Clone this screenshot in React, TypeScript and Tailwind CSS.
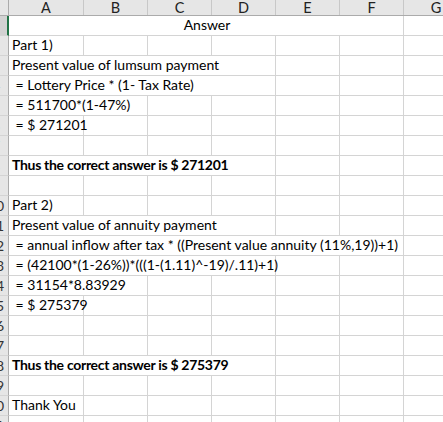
import React from "react";

type Row = { text?: string; span?: number; bold?: boolean; center?: boolean };

const rows: Row[] = [
  { text: "Answer", span: 6, center: true },
  { text: "Part 1)", span: 1 },
  { text: "Present value of lumsum payment", span: 4 },
  { text: " = Lottery Price * (1- Tax Rate)", span: 4 },
  { text: " = 511700*(1-47%)", span: 2 },
  { text: " = $ 271201", span: 1 },
  {},
  { text: "Thus the correct answer is $ 271201", span: 4, bold: true },
  {},
  { text: "Part 2)", span: 1 },
  { text: "Present value of annuity payment", span: 4 },
  { text: " = annual inflow after tax * ((Present value annuity (11%,19))+1)", span: 6 },
  { text: " = (42100*(1-26%))*(((1-(1.11)^-19)/.11)+1)", span: 4 },
  { text: " = 31154*8.83929", span: 2 },
  { text: " = $ 275379", span: 1 },
  {},
  {},
  { text: "Thus the correct answer is $ 275379", span: 4, bold: true },
  {},
  { text: "Thank You", span: 1 },
  {},
];

const colW = [75, 64, 64, 64, 64, 64];
const letters = ["A", "B", "C", "D", "E", "F"];

const font = { fontFamily: "Lato, 'Open Sans', sans-serif" };

function RowHeader({ n, selected }: { n: number; selected: boolean }) {
  return (
    <div
      className={
        "w-[9px] shrink-0 overflow-hidden border-b border-[#d4d4d4] " +
        (selected ? "bg-[#d2d2d2] border-r-2 border-r-[#217346]" : "bg-[#e6e6e6] border-r border-r-[#ababab]")
      }
    >
      <div className="ml-[-17px] w-[26px] h-full flex items-center justify-center text-[14px] text-[#333] leading-none">
        {n}
      </div>
    </div>
  );
}

export default function App() {
  return (
    <div className="w-[443px] h-[422px] overflow-hidden bg-white text-black" style={font}>
      {/* column header */}
      <div className="flex h-[16px] bg-[#e6e6e6] border-b border-[#ababab]">
        <div className="w-[9px] shrink-0 border-r border-[#ababab]" />
        {letters.map((l, i) => (
          <div
            key={l}
            style={{ width: colW[i] }}
            className="shrink-0 border-r border-[#c8c8c8] flex items-end justify-center text-[14.5px] leading-[15px] text-[#222]"
          >
            {l}
          </div>
        ))}
        <div className="w-[64px] shrink-0 flex items-end justify-center text-[14.5px] leading-[15px] text-[#222]">G</div>
      </div>
      {rows.map((r, idx) => {
        const span = r.span ?? 0;
        const spanW = colW.slice(0, span).reduce((a, b) => a + b, 0);
        const rest = colW.slice(span);
        return (
          <div key={idx} className="flex h-[20px]">
            <RowHeader n={idx + 1} selected={idx === 0} />
            {span > 0 && (
              <div
                style={{ width: spanW }}
                className={
                  "shrink-0 border-r border-b border-[#d4d4d4] flex items-end pb-[1px] whitespace-pre text-[14px] leading-[18px] " +
                  (r.center ? "justify-center pl-[2px] " : "pl-[3px] ") +
                  (r.bold ? "font-bold tracking-[-0.3px]" : "")
                }
              >
                {r.text}
              </div>
            )}
            {rest.map((w, j) => (
              <div key={j} style={{ width: w }} className="shrink-0 border-r border-b border-[#d4d4d4]" />
            ))}
            <div className="flex-1 border-b border-[#d4d4d4]" />
          </div>
        );
      })}
    </div>
  );
}
